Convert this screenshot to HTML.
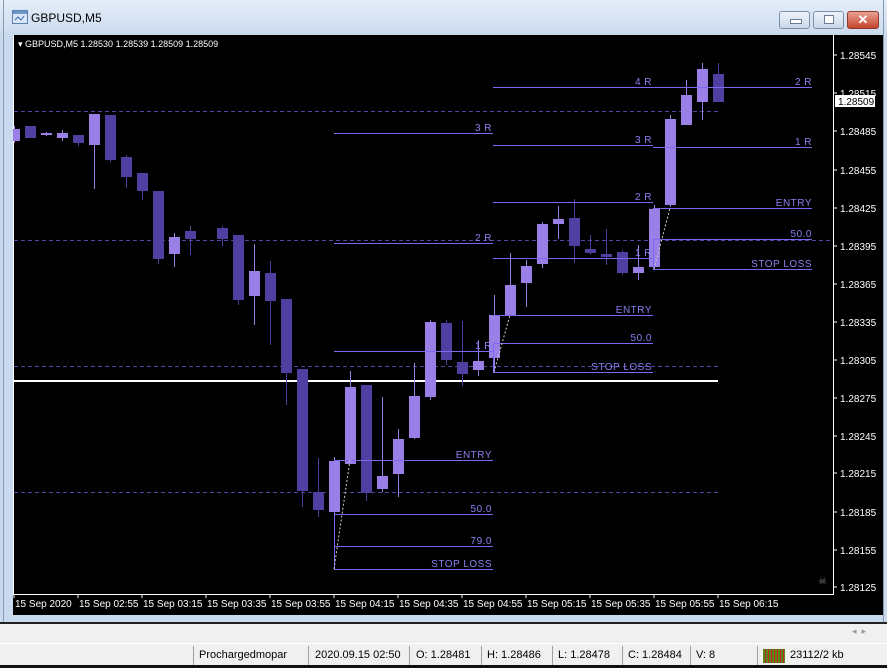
<!DOCTYPE html>
<html><head><meta charset="utf-8"><style>
html,body{margin:0;padding:0;width:887px;height:668px;overflow:hidden;background:#f0f0f0;font-family:"Liberation Sans",sans-serif}
.abs{position:absolute;white-space:nowrap}
</style></head><body>
<div class="abs" style="left:0;top:0;width:887px;height:622px;background:#c9d9ee;border-top:1px solid #6f7f95;box-sizing:border-box"></div>
<div class="abs" style="left:0;top:0;width:887px;height:33px;background:linear-gradient(#e4edf9,#cddcef)"></div>
<div class="abs" style="left:3px;top:0;width:1px;height:622px;background:#8a99ae"></div>
<div class="abs" style="left:883px;top:0;width:1px;height:622px;background:#8a99ae"></div>
<svg class="abs" style="left:12px;top:10px" width="18" height="16"><rect x="0.5" y="0.5" width="15" height="13" fill="#d8e6f7" stroke="#5b7fb0"/><rect x="1" y="1" width="14" height="3" fill="#6f94c8"/><path d="M3 10 L6 7 L9 10 L12 6" stroke="#3a6ab0" fill="none"/></svg>
<div class="abs" style="left:31px;top:11px;font-size:12px;color:#000">GBPUSD,M5</div>
<div class="abs" style="left:779px;top:11px;width:31px;height:18px;border:1px solid #7c8fa9;border-radius:3px;background:linear-gradient(#eef3fa,#c9d6e8);box-sizing:border-box"></div>
<div class="abs" style="left:790px;top:19px;width:10px;height:3px;background:#fff;border:1px solid #6b7c93"></div>
<div class="abs" style="left:813px;top:11px;width:31px;height:18px;border:1px solid #7c8fa9;border-radius:3px;background:linear-gradient(#eef3fa,#c9d6e8);box-sizing:border-box"></div>
<div class="abs" style="left:824px;top:15px;width:8px;height:7px;background:#fff;border:1px solid #6b7c93"></div>
<div class="abs" style="left:847px;top:11px;width:32px;height:18px;border:1px solid #8e3a2c;border-radius:3px;background:linear-gradient(#e9a08f,#c5452f);box-sizing:border-box;color:#fff;font-weight:bold;font-size:13px;text-align:center;line-height:16px">✕</div>

<div class="abs" style="left:0;top:622px;width:887px;height:2px;background:#222"></div>
<div class="abs" style="left:0;top:643px;width:887px;height:1px;background:#fff"></div>
<div class="abs" style="left:0;top:665px;width:887px;height:3px;background:#111"></div>
<div class="abs" style="left:852px;top:626px;font-size:9px;color:#999">◂ &nbsp;▸</div>
<div class="abs" style="left:0;top:646px;width:887px;font-size:11px;color:#000;height:19px;line-height:19px">
<span class="abs" style="left:193px;top:0;width:1px;height:19px;background:#a0a0a0"></span><span class="abs" style="left:199px">Prochargedmopar</span>
<span class="abs" style="left:308px;top:0;width:1px;height:19px;background:#a0a0a0"></span><span class="abs" style="left:315px">2020.09.15 02:50</span>
<span class="abs" style="left:409px;top:0;width:1px;height:19px;background:#a0a0a0"></span><span class="abs" style="left:416px">O: 1.28481</span>
<span class="abs" style="left:481px;top:0;width:1px;height:19px;background:#a0a0a0"></span><span class="abs" style="left:487px">H: 1.28486</span>
<span class="abs" style="left:552px;top:0;width:1px;height:19px;background:#a0a0a0"></span><span class="abs" style="left:558px">L: 1.28478</span>
<span class="abs" style="left:622px;top:0;width:1px;height:19px;background:#a0a0a0"></span><span class="abs" style="left:628px">C: 1.28484</span>
<span class="abs" style="left:690px;top:0;width:1px;height:19px;background:#a0a0a0"></span><span class="abs" style="left:696px">V: 8</span>
<span class="abs" style="left:757px;top:0;width:1px;height:19px;background:#a0a0a0"></span>
<span class="abs" style="left:763px;top:3px;width:22px;height:14px;background:repeating-linear-gradient(90deg,#5a8a1a 0 2px,#c02020 2px 3px)"></span>
<span class="abs" style="left:790px">23112/2 kb</span>
</div>

<svg class="abs" style="left:13px;top:35px" width="870" height="580" viewBox="13 35 870 580" font-family="Liberation Sans, sans-serif">
<rect x="13" y="35" width="870" height="580" fill="#000"/>
<g stroke="#fff" stroke-width="1"><line x1="13.5" y1="35" x2="13.5" y2="595"/><line x1="833.5" y1="35" x2="833.5" y2="595"/><line x1="13" y1="594.5" x2="834" y2="594.5"/></g>
<g stroke="#fff">
<line x1="14" y1="594" x2="14" y2="598"/><line x1="78" y1="594" x2="78" y2="598"/><line x1="142" y1="594" x2="142" y2="598"/><line x1="206" y1="594" x2="206" y2="598"/><line x1="270" y1="594" x2="270" y2="598"/><line x1="334" y1="594" x2="334" y2="598"/><line x1="398" y1="594" x2="398" y2="598"/><line x1="462" y1="594" x2="462" y2="598"/><line x1="526" y1="594" x2="526" y2="598"/><line x1="590" y1="594" x2="590" y2="598"/><line x1="654" y1="594" x2="654" y2="598"/><line x1="718" y1="594" x2="718" y2="598"/>
</g>
<g fill="#fff" font-size="10">
<text x="15" y="607">15 Sep 2020</text><text x="79" y="607">15 Sep 02:55</text><text x="143" y="607">15 Sep 03:15</text><text x="207" y="607">15 Sep 03:35</text><text x="271" y="607">15 Sep 03:55</text><text x="335" y="607">15 Sep 04:15</text><text x="399" y="607">15 Sep 04:35</text><text x="463" y="607">15 Sep 04:55</text><text x="527" y="607">15 Sep 05:15</text><text x="591" y="607">15 Sep 05:35</text><text x="655" y="607">15 Sep 05:55</text><text x="719" y="607">15 Sep 06:15</text>
</g>
<g fill="#fff" font-size="10">
<text x="840" y="59">1.28545</text><text x="840" y="97">1.28515</text><text x="840" y="135">1.28485</text><text x="840" y="174">1.28455</text><text x="840" y="212">1.28425</text><text x="840" y="250">1.28395</text><text x="840" y="288">1.28365</text><text x="840" y="326">1.28335</text><text x="840" y="364">1.28305</text><text x="840" y="402">1.28275</text><text x="840" y="440">1.28245</text><text x="840" y="477">1.28215</text><text x="840" y="516">1.28185</text><text x="840" y="554">1.28155</text><text x="840" y="591">1.28125</text>
</g>
<g stroke="#fff"><line x1="834" y1="55" x2="837" y2="55"/><line x1="834" y1="93" x2="837" y2="93"/><line x1="834" y1="131" x2="837" y2="131"/><line x1="834" y1="170" x2="837" y2="170"/><line x1="834" y1="208" x2="837" y2="208"/><line x1="834" y1="246" x2="837" y2="246"/><line x1="834" y1="284" x2="837" y2="284"/><line x1="834" y1="322" x2="837" y2="322"/><line x1="834" y1="360" x2="837" y2="360"/><line x1="834" y1="398" x2="837" y2="398"/><line x1="834" y1="436" x2="837" y2="436"/><line x1="834" y1="473" x2="837" y2="473"/><line x1="834" y1="512" x2="837" y2="512"/><line x1="834" y1="550" x2="837" y2="550"/><line x1="834" y1="587" x2="837" y2="587"/></g>
<rect x="835" y="95" width="40" height="12" fill="#fff"/><text x="838" y="105" font-size="10" fill="#000">1.28509</text>
<text x="818" y="584" font-size="10" fill="#777">☠</text>
<text x="18" y="47" font-size="9" fill="#fff">▾ GBPUSD,M5  1.28530 1.28539 1.28509 1.28509</text>

<g stroke="#4c4aa8" stroke-dasharray="4,3"><line x1="14" y1="111.5" x2="718" y2="111.5"/><line x1="14" y1="240.5" x2="832" y2="240.5"/><line x1="14" y1="366.5" x2="718" y2="366.5"/><line x1="14" y1="492.5" x2="718" y2="492.5"/></g>
<line x1="14" y1="381" x2="718" y2="381" stroke="#fff" stroke-width="2"/>

<g>
<g stroke-width="1">
<path stroke="#9a7fe6" d="M14.5 126V143M46.5 132V136M62.5 130V141M94.5 114V189M174.5 233V267M254.5 244V325M334.5 457V515M350.5 371V464M382.5 397V492M398.5 429V497M414.5 363V439M430.5 320V400M478.5 340V376M494.5 295V370M510.5 253V316M526.5 260V307M542.5 222V268M558.5 206V239M638.5 245V280M654.5 205V268M670.5 115V207M686.5 80V125M702.5 63V120"/>
<path stroke="#4f3fa0" d="M30.5 126V138M78.5 135V146M110.5 115V162M126.5 155V188M142.5 173V200M158.5 191V264M190.5 226V255M222.5 226V246M238.5 235V305M270.5 261V345M286.5 299V405M302.5 369V507M318.5 458V517M366.5 385V501M446.5 320V365M462.5 321V386M574.5 199V263M590.5 235V255M606.5 229V265M622.5 250V275M718.5 63V102"/>
</g>
<g fill="#9a7fe6">
<rect x="12" y="129" width="8" height="12"/><rect x="41" y="133" width="11" height="2"/><rect x="57" y="133" width="11" height="5"/><rect x="89" y="114" width="11" height="31"/><rect x="169" y="237" width="11" height="17"/><rect x="249" y="271" width="11" height="25"/><rect x="329" y="461" width="11" height="51"/><rect x="345" y="387" width="11" height="77"/><rect x="377" y="476" width="11" height="13"/><rect x="393" y="439" width="11" height="35"/><rect x="409" y="396" width="11" height="42"/><rect x="425" y="322" width="11" height="75"/><rect x="473" y="361" width="11" height="9"/><rect x="489" y="315" width="11" height="43"/><rect x="505" y="285" width="11" height="30"/><rect x="521" y="266" width="11" height="17"/><rect x="537" y="224" width="11" height="40"/><rect x="553" y="219" width="11" height="5"/><rect x="633" y="267" width="11" height="6"/><rect x="649" y="209" width="11" height="58"/><rect x="665" y="119" width="11" height="86"/><rect x="681" y="95" width="11" height="30"/><rect x="697" y="69" width="11" height="33"/>
</g>
<g fill="#4f3fa0">
<rect x="25" y="126" width="11" height="12"/><rect x="73" y="135" width="11" height="8"/><rect x="105" y="115" width="11" height="45"/><rect x="121" y="157" width="11" height="20"/><rect x="137" y="173" width="11" height="18"/><rect x="153" y="191" width="11" height="68"/><rect x="185" y="231" width="11" height="8"/><rect x="217" y="228" width="11" height="11"/><rect x="233" y="235" width="11" height="65"/><rect x="265" y="273" width="11" height="28"/><rect x="281" y="299" width="11" height="74"/><rect x="297" y="369" width="11" height="122"/><rect x="313" y="492" width="11" height="18"/><rect x="361" y="385" width="11" height="108"/><rect x="441" y="323" width="11" height="37"/><rect x="457" y="362" width="11" height="12"/><rect x="569" y="218" width="11" height="28"/><rect x="585" y="249" width="11" height="4"/><rect x="601" y="254" width="11" height="3"/><rect x="617" y="252" width="11" height="21"/><rect x="713" y="74" width="11" height="28"/>
</g>
</g>

<g stroke="#7a6af0" stroke-width="1">
<path d="M334 133.5H493M334 243.5H493M334 351.5H493M334 460.5H493M334 514.5H493M334 546.5H493M334 569.5H493M334.5 514V569"/>
<path d="M493 87.5H653M493 145.5H653M493 202.5H653M493 258.5H653M493 315.5H653M493 343.5H653M493 372.5H653M493.5 343V372"/>
<path d="M653 87.5H812M653 147.5H812M653 208.5H812M653 239.5H812M653 269.5H812M653.5 239V269"/>
</g>
<g stroke="#ccc" stroke-dasharray="2,2" fill="none"><path d="M334 569L350 460M494 372L510 315M654 269L670 208"/></g>
<g fill="#8a80f0" font-size="10" text-anchor="end" letter-spacing="0.5">
<text x="492" y="131">3  R</text><text x="492" y="241">2  R</text><text x="492" y="349">1  R</text><text x="492" y="458">ENTRY</text><text x="492" y="512">50.0</text><text x="492" y="544">79.0</text><text x="492" y="567">STOP LOSS</text>
<text x="652" y="85">4  R</text><text x="652" y="143">3  R</text><text x="652" y="200">2  R</text><text x="652" y="256">1  R</text><text x="652" y="313">ENTRY</text><text x="652" y="341">50.0</text><text x="652" y="370">STOP LOSS</text>
<text x="812" y="85">2  R</text><text x="812" y="145">1  R</text><text x="812" y="206">ENTRY</text><text x="812" y="237">50.0</text><text x="812" y="267">STOP LOSS</text>
</g>
</svg>
</body></html>
